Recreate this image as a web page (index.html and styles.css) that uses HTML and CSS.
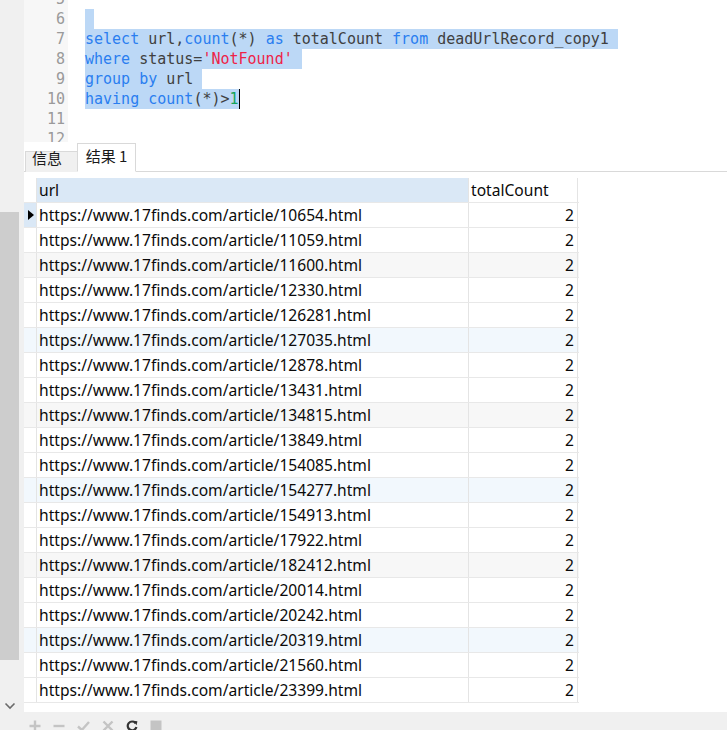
FILE: index.html
```html
<!DOCTYPE html>
<html>
<head>
<meta charset="utf-8">
<link rel="stylesheet" href="styles.css">
</head>
<body>
<div class="app">
  <div class="top">
    <aside class="sidebar">
      <div class="thumb"></div>
      <svg class="chev" width="12" height="8" viewBox="0 0 12 8"><path d="M1.5 1.5 L6 6 L10.5 1.5" fill="none" stroke="#6b6b6b" stroke-width="1.6"/></svg>
    </aside>
    <main class="main">
      <section class="editor">
        <div class="gutter">
          <div class="ln">5</div>
          <div class="ln">6</div>
          <div class="ln">7</div>
          <div class="ln">8</div>
          <div class="ln">9</div>
          <div class="ln">10</div>
          <div class="ln">11</div>
          <div class="ln">12</div>
        </div>
        <div class="code">
          <div class="line"></div>
          <div class="line"><span class="sel"> </span></div>
          <div class="line"><span class="sel"><span class="kw">select</span> url,<span class="kw">count</span>(*) <span class="kw">as</span> totalCount <span class="kw">from</span> deadUrlRecord_copy1 </span></div>
          <div class="line"><span class="sel"><span class="kw">where</span> status=<span class="str">'NotFound'</span> </span></div>
          <div class="line"><span class="sel"><span class="kw">group by</span> url </span></div>
          <div class="line"><span class="sel"><span class="kw">having</span> <span class="kw">count</span>(*)&gt;<span class="num">1</span></span><span class="caret"></span></div>
          <div class="line"></div>
          <div class="line"></div>
        </div>
      </section>
      <nav class="tabs">
        <div class="tab">信息</div>
        <div class="tab active">结果 1</div>
      </nav>
      <section class="grid">
        <div class="row head">
          <div class="ind"></div>
          <div class="c-url hdr-sel">url</div>
          <div class="c-num left">totalCount</div>
        </div>
        <div class="row"><div class="ind cur"><span class="tri"></span></div><div class="c-url">https://www.17finds.com/article/10654.html</div><div class="c-num">2</div></div>
        <div class="row"><div class="ind"></div><div class="c-url">https://www.17finds.com/article/11059.html</div><div class="c-num">2</div></div>
        <div class="row gray"><div class="ind"></div><div class="c-url">https://www.17finds.com/article/11600.html</div><div class="c-num">2</div></div>
        <div class="row"><div class="ind"></div><div class="c-url">https://www.17finds.com/article/12330.html</div><div class="c-num">2</div></div>
        <div class="row"><div class="ind"></div><div class="c-url">https://www.17finds.com/article/126281.html</div><div class="c-num">2</div></div>
        <div class="row blue"><div class="ind"></div><div class="c-url">https://www.17finds.com/article/127035.html</div><div class="c-num">2</div></div>
        <div class="row"><div class="ind"></div><div class="c-url">https://www.17finds.com/article/12878.html</div><div class="c-num">2</div></div>
        <div class="row"><div class="ind"></div><div class="c-url">https://www.17finds.com/article/13431.html</div><div class="c-num">2</div></div>
        <div class="row gray"><div class="ind"></div><div class="c-url">https://www.17finds.com/article/134815.html</div><div class="c-num">2</div></div>
        <div class="row"><div class="ind"></div><div class="c-url">https://www.17finds.com/article/13849.html</div><div class="c-num">2</div></div>
        <div class="row"><div class="ind"></div><div class="c-url">https://www.17finds.com/article/154085.html</div><div class="c-num">2</div></div>
        <div class="row blue"><div class="ind"></div><div class="c-url">https://www.17finds.com/article/154277.html</div><div class="c-num">2</div></div>
        <div class="row"><div class="ind"></div><div class="c-url">https://www.17finds.com/article/154913.html</div><div class="c-num">2</div></div>
        <div class="row"><div class="ind"></div><div class="c-url">https://www.17finds.com/article/17922.html</div><div class="c-num">2</div></div>
        <div class="row gray"><div class="ind"></div><div class="c-url">https://www.17finds.com/article/182412.html</div><div class="c-num">2</div></div>
        <div class="row"><div class="ind"></div><div class="c-url">https://www.17finds.com/article/20014.html</div><div class="c-num">2</div></div>
        <div class="row"><div class="ind"></div><div class="c-url">https://www.17finds.com/article/20242.html</div><div class="c-num">2</div></div>
        <div class="row blue"><div class="ind"></div><div class="c-url">https://www.17finds.com/article/20319.html</div><div class="c-num">2</div></div>
        <div class="row"><div class="ind"></div><div class="c-url">https://www.17finds.com/article/21560.html</div><div class="c-num">2</div></div>
        <div class="row"><div class="ind"></div><div class="c-url">https://www.17finds.com/article/23399.html</div><div class="c-num">2</div></div>
      </section>
    </main>
  </div>
  <footer class="toolbar">
    <svg class="ico" width="12" height="12" viewBox="0 0 12 12"><path d="M6 0.5V11.5M0.5 6H11.5" stroke="#c4c4c4" stroke-width="2.4"/></svg>
    <svg class="ico" width="12" height="12" viewBox="0 0 12 12"><path d="M0.5 6H11.5" stroke="#c4c4c4" stroke-width="2.4"/></svg>
    <svg class="ico" width="13" height="12" viewBox="0 0 13 12"><path d="M1 6.5L4.8 10L12 2" fill="none" stroke="#c4c4c4" stroke-width="2.4"/></svg>
    <svg class="ico" width="12" height="12" viewBox="0 0 12 12"><path d="M1.5 1.5L10.5 10.5M10.5 1.5L1.5 10.5" stroke="#c4c4c4" stroke-width="2.4"/></svg>
    <svg class="ico" width="12" height="12" viewBox="0 0 12 12"><path d="M9.6 3.2A4.4 4.4 0 1 0 10.4 7" fill="none" stroke="#333" stroke-width="2.2"/><path d="M7 0.8L11.4 1.2L10.6 5.2Z" fill="#333"/></svg>
    <svg class="ico" width="12" height="12" viewBox="0 0 12 12"><rect x="0.5" y="0.5" width="11" height="11" fill="#c4c4c4"/></svg>
  </footer>
</div>
</body>
</html>
```

FILE: styles.css
```css
* { box-sizing: border-box; }
html, body { margin: 0; padding: 0; background: #fff; }
body { width: 727px; height: 730px; overflow: hidden; }

.app { display: flex; flex-direction: column; width: 727px; height: 730px; }
.top { display: flex; height: 712px; }

.sidebar {
  width: 24px; flex: none; background: #f0f0f0;
  display: flex; flex-direction: column; align-items: flex-start;
}
.thumb { width: 19px; height: 448px; margin-top: 212px; background: #cdcdcd; }
.chev { margin-top: 42px; margin-left: 4px; }

.main { flex: 1; display: flex; flex-direction: column; min-width: 0; }

.editor {
  height: 142px; flex: none; display: flex; overflow: hidden;
  font-family: "DejaVu Sans Mono", monospace; font-size: 15px; line-height: 20px;
}
.gutter { width: 44px; flex: none; background: #f7f7f7; margin-top: -11px; padding-right: 3px; }
.ln { text-align: right; color: #9a9a9a; height: 20px; }
.code { flex: 1; margin-top: -11px; padding-left: 17px; color: #404040; }
.line { height: 20px; white-space: pre; }
.sel { background: #bcd8f6; display: inline-block; height: 20px; vertical-align: top; }
.kw { color: #2a7ef0; }
.str { color: #ee2348; }
.num { color: #15a35a; }
.caret { display: inline-block; width: 1px; height: 20px; background: #000; vertical-align: top; }

.tabs {
  height: 30px; flex: none; display: flex; align-items: flex-end;
  padding-left: 1px; border-bottom: 1px solid #d9d9d9;
  font-family: "Noto Sans CJK SC", sans-serif; font-size: 15px; color: #1a1a1a;
}
.tab {
  height: 21px; width: 53px; margin-bottom: -1px;
  background: #f0f0f0; border: 1px solid #d9d9d9; border-bottom: none;
  text-align: left; padding-left: 6px; line-height: 11px;
}
.tab.active {
  height: 29px; width: 59px; background: #fff; margin-left: -1px;
  border-bottom: 1px solid #fff; line-height: 24px; text-align: center; padding-left: 0;
}

.grid {
  margin-top: 6px; width: 555px;
  font-family: "Noto Sans", sans-serif; font-size: 15.6px; color: #0a0a0a;
}
.row { display: flex; height: 25px; border-bottom: 1px solid #e8e8e8; }
.ind { width: 13px; flex: none; border-right: 1px solid #e4e4e4; display: flex; align-items: center; justify-content: center; }
.ind.cur { background: #dae8f6; }
.tri { width: 0; height: 0; border-left: 6px solid #000; border-top: 5px solid transparent; border-bottom: 5px solid transparent; margin-left: 1px; }
.c-url { width: 432px; flex: none; padding-left: 2px; border-right: 1px solid #e4e4e4; line-height: 24px; white-space: nowrap; overflow: hidden; }
.c-num { width: 109px; flex: none; padding-right: 3px; text-align: right; border-right: 1px solid #e4e4e4; line-height: 24px; }
.c-num.left { text-align: left; padding-left: 2px; }
.hdr-sel { background: #dae8f6; }
.row.gray { background: #f7f7f7; }
.row.blue { background: #f2f8fd; }

.toolbar {
  height: 18px; flex: none; background: #f0f0f0; overflow: hidden;
  display: flex; align-items: flex-start; padding-top: 8px; padding-left: 29px; gap: 12px;
}
.ico { flex: none; }
```
